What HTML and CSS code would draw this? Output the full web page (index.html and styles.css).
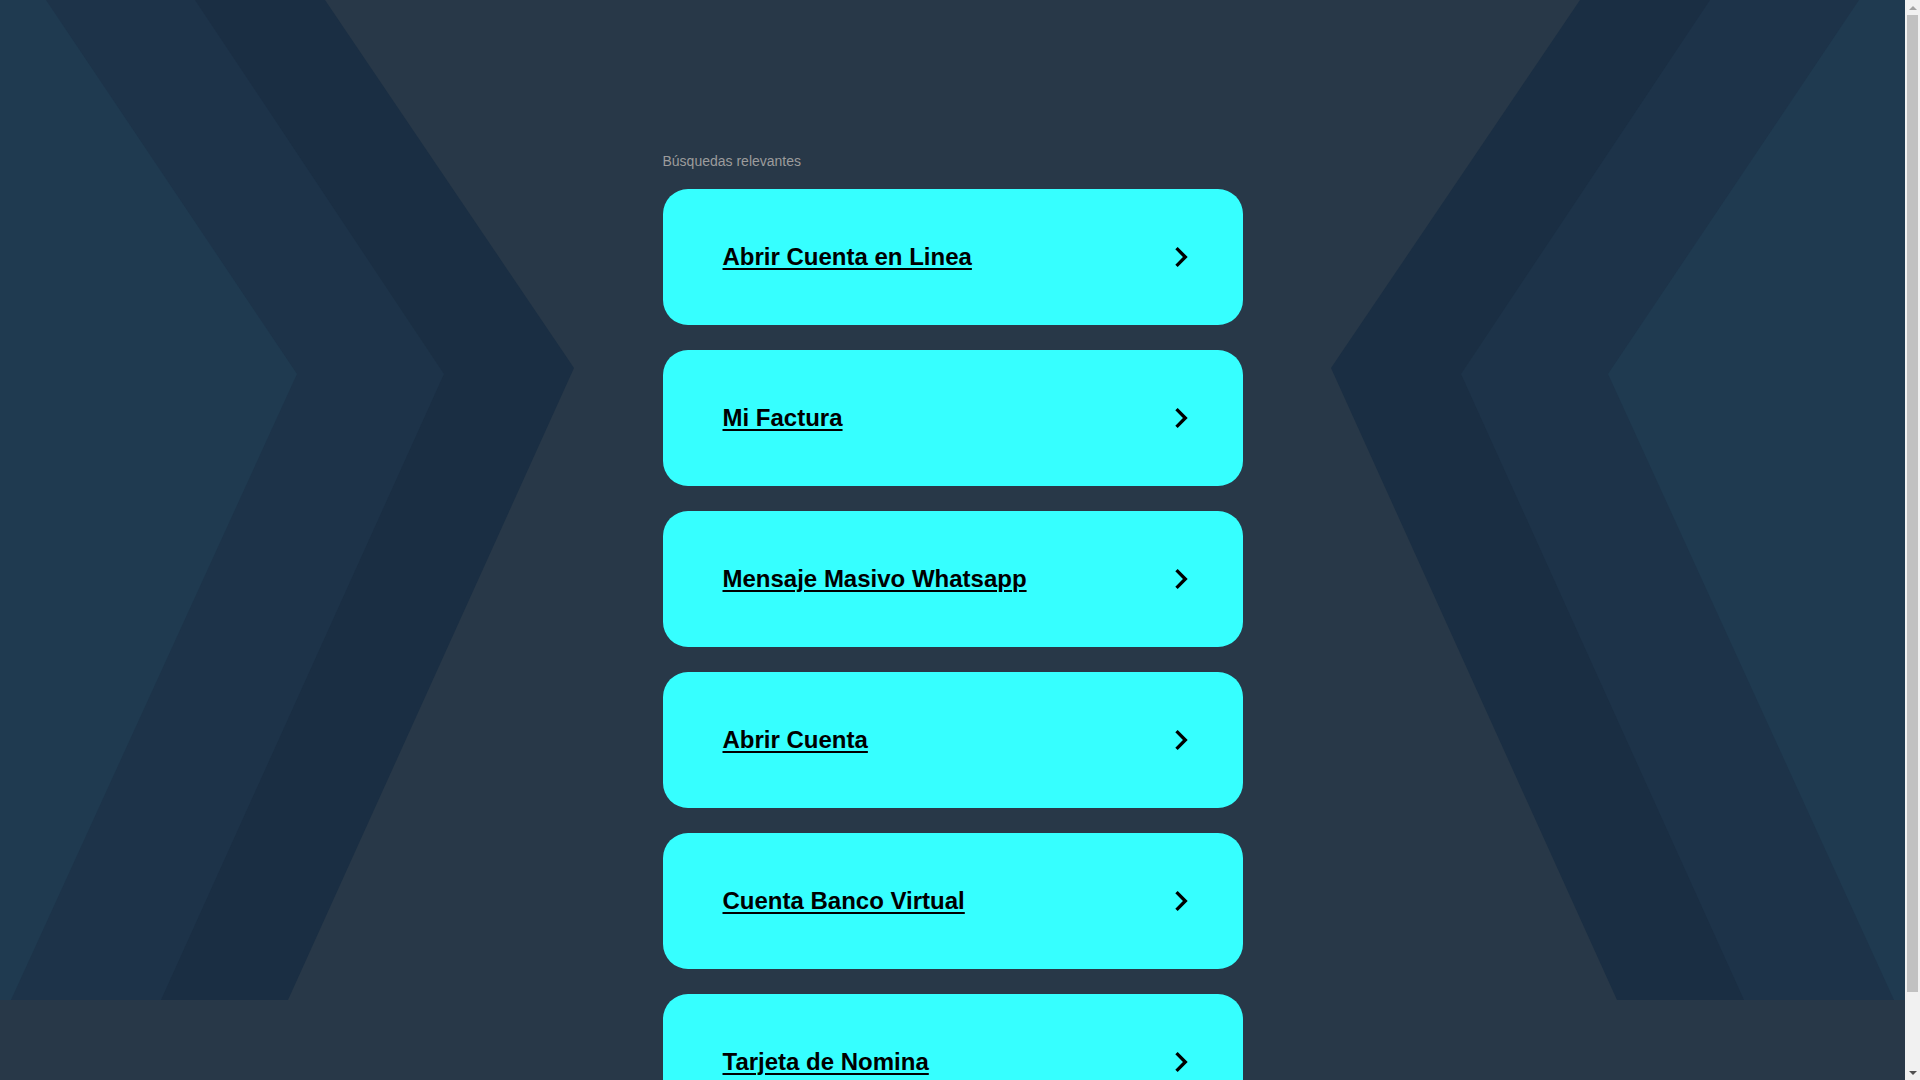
FILE: index.html
```html
<!DOCTYPE html>
<html lang="es">
<head>
<meta charset="utf-8">
<title>Búsquedas relevantes</title>
<link rel="stylesheet" href="styles.css">
</head>
<body>
<div class="screen">
  <svg class="backdrop" viewBox="0 0 1905 1000" preserveAspectRatio="none" aria-hidden="true">
    <polygon fill="#1a2e43" points="0,0 325,0 574,368 288,1000 0,1000"/>
    <polygon fill="#1d3349" points="0,0 195,0 444,374 161,1000 0,1000"/>
    <polygon fill="#1f3a50" points="0,0 46,0 297,374 11,1000 0,1000"/>
    <polygon fill="#1a2e43" points="1905,0 1580,0 1331,368 1617,1000 1905,1000"/>
    <polygon fill="#1d3349" points="1905,0 1710,0 1461,374 1744,1000 1905,1000"/>
    <polygon fill="#1f3a50" points="1905,0 1859,0 1608,374 1894,1000 1905,1000"/>
  </svg>
  <main class="page">
    <p class="label">Búsquedas relevantes</p>
    <ul class="links">
      <li><a class="card" href="#"><span class="card-text">Abrir Cuenta en Linea</span><svg class="chev" viewBox="0 0 24 24"><path d="M10 6L8.59 7.41 13.17 12l-4.58 4.59L10 18l6-6z"/></svg></a></li>
      <li><a class="card" href="#"><span class="card-text">Mi Factura</span><svg class="chev" viewBox="0 0 24 24"><path d="M10 6L8.59 7.41 13.17 12l-4.58 4.59L10 18l6-6z"/></svg></a></li>
      <li><a class="card" href="#"><span class="card-text">Mensaje Masivo Whatsapp</span><svg class="chev" viewBox="0 0 24 24"><path d="M10 6L8.59 7.41 13.17 12l-4.58 4.59L10 18l6-6z"/></svg></a></li>
      <li><a class="card" href="#"><span class="card-text">Abrir Cuenta</span><svg class="chev" viewBox="0 0 24 24"><path d="M10 6L8.59 7.41 13.17 12l-4.58 4.59L10 18l6-6z"/></svg></a></li>
      <li><a class="card" href="#"><span class="card-text">Cuenta Banco Virtual</span><svg class="chev" viewBox="0 0 24 24"><path d="M10 6L8.59 7.41 13.17 12l-4.58 4.59L10 18l6-6z"/></svg></a></li>
      <li><a class="card" href="#"><span class="card-text">Tarjeta de Nomina</span><svg class="chev" viewBox="0 0 24 24"><path d="M10 6L8.59 7.41 13.17 12l-4.58 4.59L10 18l6-6z"/></svg></a></li>
    </ul>
  </main>
</div>
<div class="scrollbar" aria-hidden="true">
  <div class="sb-btn"><span class="arrow-up"></span></div>
  <div class="sb-track"><div class="sb-thumb"></div></div>
  <div class="sb-btn"><span class="arrow-down"></span></div>
</div>
</body>
</html>
```
FILE: styles.css
```css
html, body {
  margin: 0;
  padding: 0;
}

body {
  background: #283848;
  font-family: "Liberation Sans", Arial, sans-serif;
  display: flex;
  align-items: flex-start;
  min-height: 100vh;
}

.screen {
  flex: 1;
  position: relative;
  min-width: 0;
}

.backdrop {
  position: absolute;
  top: 0;
  left: 0;
  width: 100%;
  height: 1000px;
  z-index: 0;
  display: block;
}

.page {
  position: relative;
  z-index: 1;
  width: 580px;
  margin: 0 auto;
  padding: 153px 0 5px;
}

.label {
  margin: 0 0 20px;
  font-size: 14px;
  line-height: 16px;
  color: #9c9c9c;
}

.links {
  list-style: none;
  margin: 0;
  padding: 0;
}

.links li {
  margin: 0 0 25px;
}

.card {
  display: flex;
  align-items: center;
  justify-content: space-between;
  height: 136px;
  box-sizing: border-box;
  padding: 0 42px 0 60px;
  background: #36ffff;
  border-radius: 25px;
  color: #000;
  text-decoration: none;
}

.card-text {
  font-size: 24px;
  font-weight: bold;
  text-decoration: underline;
  text-decoration-thickness: 2px;
  text-underline-offset: 3px;
  color: #000;
}

.chev {
  width: 40px;
  height: 40px;
  fill: #000;
  flex: none;
  margin-top: -1px;
}

/* scrollbar replica */
.scrollbar {
  position: sticky;
  top: 0;
  flex: none;
  width: 15px;
  height: 100vh;
  background: #f1f1f1;
  display: flex;
  flex-direction: column;
}

.sb-btn {
  height: 15px;
  display: flex;
  align-items: center;
  justify-content: center;
  flex: none;
}

.arrow-up {
  width: 0;
  height: 0;
  border-left: 4px solid transparent;
  border-right: 4px solid transparent;
  border-bottom: 4px solid #a3a3a3;
}

.arrow-down {
  width: 0;
  height: 0;
  border-left: 4px solid transparent;
  border-right: 4px solid transparent;
  border-top: 4px solid #505050;
}

.sb-track {
  flex: 1;
  display: flex;
  justify-content: center;
}

.sb-thumb {
  width: 11px;
  height: 977px;
  background: #c1c1c1;
}
```
